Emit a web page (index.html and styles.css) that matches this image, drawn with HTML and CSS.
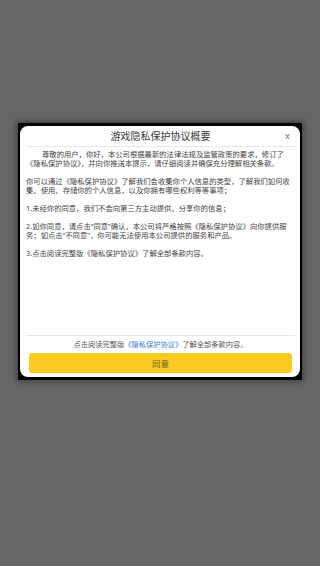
FILE: index.html
```html
<!DOCTYPE html>
<html lang="zh-CN">
<head>
    <meta charset="UTF-8">
    <meta name="viewport" content="width=device-width, initial-scale=1.0">
    <title>游戏隐私保护协议概要</title>
    <link rel="stylesheet" href="styles.css">
</head>
<body>
    <div class="dialog-frame">
        <div class="dialog">
            <div class="dialog-head">
                <h1>游戏隐私保护协议概要</h1>
                <span class="close-btn">x</span>
            </div>

            <!-- Summary text -->
            <div class="dialog-body">
                <p class="indent">尊敬的用户，你好，本公司根据最新的法律法规及监管政策的要求，修订了《隐私保护协议》，并向你推送本提示，请仔细阅读并确保充分理解相关条款。</p>
                <p>你可以通过《隐私保护协议》了解我们会收集你个人信息的类型，了解我们如何收集、使用、存储你的个人信息，以及你拥有哪些权利等等事项；</p>
                <p>1.未经你的同意，我们不会向第三方主动提供、分享你的信息；</p>
                <p>2.如你同意，请点击“同意”确认，本公司将严格按照《隐私保护协议》向你提供服务；如点击“不同意”，你可能无法使用本公司提供的服务和产品。</p>
                <p>3.点击阅读完整版《隐私保护协议》了解全部条款内容。</p>
            </div>

            <div class="dialog-foot">
                <p class="foot-note">点击阅读完整版<a href="#" class="link">《隐私保护协议》</a>了解全部条款内容。</p>
                <button type="button" class="agree-button">同意</button>
            </div>
        </div>
    </div>
</body>
</html>
```

FILE: styles.css
```css
/* Page */
body {
    margin: 0;
    padding-top: 123px;
    min-height: 566px;
    box-sizing: border-box;
    background-color: #666666;
    font-family: "Noto Sans", "Noto Sans CJK SC", sans-serif;
    color: #444;
}

/* Dialog */
.dialog-frame {
    margin: 0 18px;
    padding: 3px 2px 3px 2px;
    background-color: #000;
    box-shadow: 0 0 6px 2px rgba(0, 0, 0, 0.35);
}

.dialog {
    height: 251px;
    background-color: #fff;
    border-radius: 8px;
    display: flex;
    flex-direction: column;
}

.dialog-head {
    position: relative;
    height: 20px;
    margin: 0 5px 0 6px;
    border-bottom: 1px solid #e8e8e8;
    display: flex;
    align-items: center;
    justify-content: center;
}

.dialog-head h1 {
    margin: 0;
    font-size: 10px;
    font-weight: normal;
    line-height: 20px;
    color: #3a3a3a;
}

.close-btn {
    position: absolute;
    right: 5px;
    top: 4px;
    font-family: "DejaVu Sans", sans-serif;
    font-size: 9px;
    line-height: 12px;
    color: #777;
}

.dialog-body {
    flex: 1;
    padding: 3px 6px 0 6px;
    font-size: 7.33px;
    line-height: 9px;
}

.dialog-body p {
    margin: 0 0 9px 0;
}

.dialog-body .indent {
    text-indent: 16px;
}

/* Footer */
.dialog-foot {
    margin: 0 5px 0 6px;
    border-top: 1px solid #e8e8e8;
    padding: 4px 3px 4px 3px;
}

.foot-note {
    margin: 0 0 4px 0;
    text-align: center;
    font-size: 7.25px;
    line-height: 9px;
    color: #555;
}

.link {
    color: #3b7be0;
    text-decoration: none;
}

.agree-button {
    display: block;
    width: 100%;
    height: 20px;
    padding: 0;
    border: none;
    border-radius: 3px;
    background-color: #fcca22;
    color: #6b5b2a;
    font-family: "Noto Sans CJK SC", sans-serif;
    font-size: 8.5px;
    cursor: pointer;
}
```
